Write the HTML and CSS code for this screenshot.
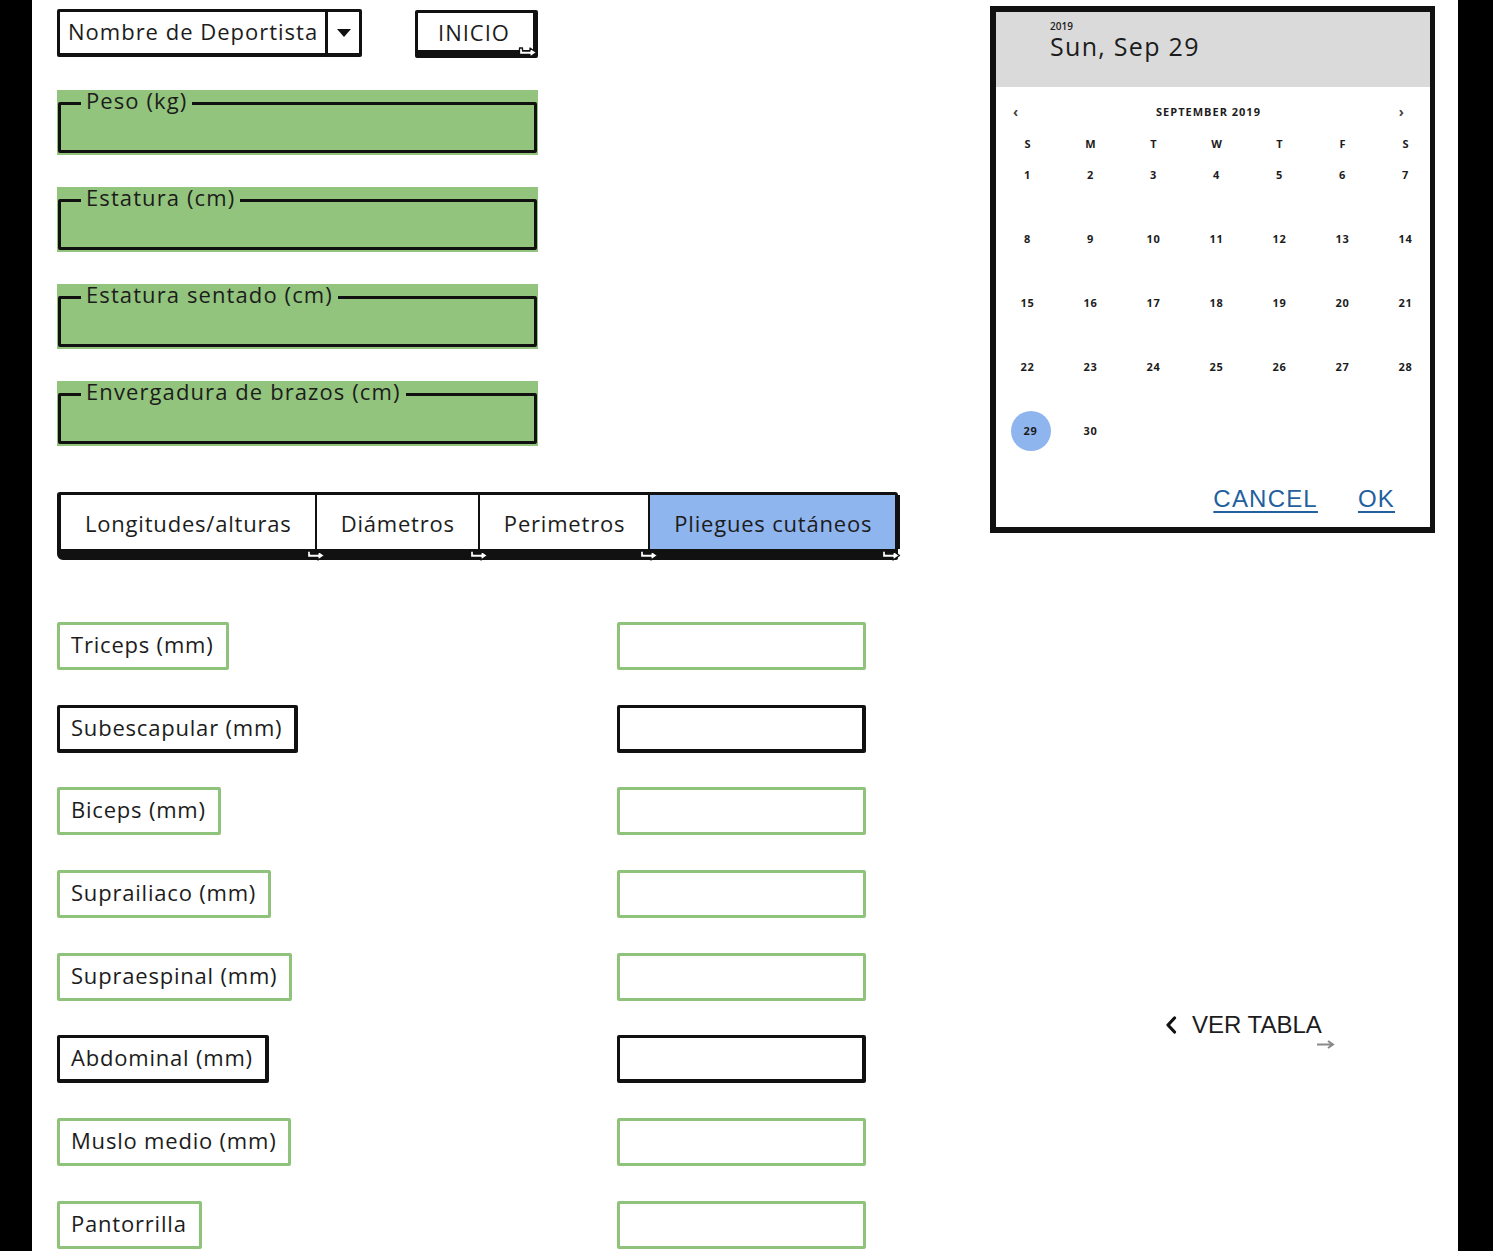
FILE: index.html
```html
<!DOCTYPE html>
<html lang="es">
<head>
<meta charset="utf-8">
<title>Pliegues cutáneos</title>
<link rel="stylesheet" href="styles.css">
</head>
<body>
<div class="screen">
  <main class="left">
    <div class="toprow">
      <div class="select">
        <span class="select-text">Nombre de Deportista</span>
        <span class="select-btn"><svg width="14" height="8" viewBox="0 0 14 8"><path d="M0 0H14L7 8Z" fill="#111"/></svg></span>
      </div>
      <button class="btn">INICIO<svg class="link" width="20" height="11" viewBox="0 0 20 11"><path d="M1.5 1V7.5H12V10L18.5 5.5L12 1V4H4.5V1Z" fill="#fff" stroke="#111" stroke-width="1.3" stroke-linejoin="round"/></svg></button>
    </div>

    <div class="field"><fieldset><legend>Peso (kg)</legend></fieldset></div>
    <div class="field"><fieldset><legend>Estatura (cm)</legend></fieldset></div>
    <div class="field"><fieldset><legend>Estatura sentado (cm)</legend></fieldset></div>
    <div class="field"><fieldset><legend>Envergadura de brazos (cm)</legend></fieldset></div>

    <nav class="tabs">
      <div class="tab">Longitudes/alturas<svg class="link tab-link" width="20" height="11" viewBox="0 0 20 11"><path d="M1.5 1V7.5H12V10L18.5 5.5L12 1V4H4.5V1Z" fill="#fff" stroke="#111" stroke-width="1.3" stroke-linejoin="round"/></svg></div>
      <div class="tab">Diámetros<svg class="link tab-link" width="20" height="11" viewBox="0 0 20 11"><path d="M1.5 1V7.5H12V10L18.5 5.5L12 1V4H4.5V1Z" fill="#fff" stroke="#111" stroke-width="1.3" stroke-linejoin="round"/></svg></div>
      <div class="tab">Perimetros<svg class="link tab-link" width="20" height="11" viewBox="0 0 20 11"><path d="M1.5 1V7.5H12V10L18.5 5.5L12 1V4H4.5V1Z" fill="#fff" stroke="#111" stroke-width="1.3" stroke-linejoin="round"/></svg></div>
      <div class="tab active">Pliegues cutáneos<svg class="link tab-link" width="20" height="11" viewBox="0 0 20 11"><path d="M1.5 1V7.5H12V10L18.5 5.5L12 1V4H4.5V1Z" fill="#fff" stroke="#111" stroke-width="1.3" stroke-linejoin="round"/></svg></div>
    </nav>

    <div class="measures">
      <div class="m-label">Triceps (mm)</div><div class="m-input"></div>
      <div class="m-label dark">Subescapular (mm)</div><div class="m-input dark"></div>
      <div class="m-label">Biceps (mm)</div><div class="m-input"></div>
      <div class="m-label">Suprailiaco (mm)</div><div class="m-input"></div>
      <div class="m-label">Supraespinal (mm)</div><div class="m-input"></div>
      <div class="m-label dark">Abdominal (mm)</div><div class="m-input dark"></div>
      <div class="m-label">Muslo medio (mm)</div><div class="m-input"></div>
      <div class="m-label">Pantorrilla</div><div class="m-input"></div>
    </div>
  </main>

  <aside class="right">
    <div class="calendar">
      <div class="cal-head">
        <div class="cal-year">2019</div>
        <div class="cal-date">Sun, Sep 29</div>
      </div>
      <div class="cal-body">
        <div class="cal-month"><span class="nav">‹</span><span class="month-title">SEPTEMBER 2019</span><span class="nav">›</span></div>
        <div class="cal-week">
          <span>S</span><span>M</span><span>T</span><span>W</span><span>T</span><span>F</span><span>S</span>
        </div>
        <div class="cal-grid">
          <span><b>1</b></span><span><b>2</b></span><span><b>3</b></span><span><b>4</b></span><span><b>5</b></span><span><b>6</b></span><span><b>7</b></span>
          <span><b>8</b></span><span><b>9</b></span><span><b>10</b></span><span><b>11</b></span><span><b>12</b></span><span><b>13</b></span><span><b>14</b></span>
          <span><b>15</b></span><span><b>16</b></span><span><b>17</b></span><span><b>18</b></span><span><b>19</b></span><span><b>20</b></span><span><b>21</b></span>
          <span><b>22</b></span><span><b>23</b></span><span><b>24</b></span><span><b>25</b></span><span><b>26</b></span><span><b>27</b></span><span><b>28</b></span>
          <span><b class="sel">29</b></span><span><b>30</b></span>
        </div>
        <div class="cal-actions">
          <span class="cal-btn">CANCEL</span>
          <span class="cal-btn">OK</span>
        </div>
      </div>
    </div>

    <div class="vertabla">
      <svg class="chev" width="12" height="18" viewBox="0 0 12 18"><path d="M9.5 2L3 9L9.5 16" fill="none" stroke="#111" stroke-width="3.2" stroke-linecap="round" stroke-linejoin="round"/></svg>
      <span class="vt-text">VER TABLA<svg class="vt-link" width="18" height="9" viewBox="0 0 18 9"><path d="M0 4.5H15M11 1L16 4.5L11 8" fill="none" stroke="#8a8a8a" stroke-width="2"/></svg></span>
    </div>
  </aside>
</div>
</body>
</html>
```

FILE: styles.css
```css
* { box-sizing: border-box; }

html, body { margin: 0; padding: 0; }

body {
  background: #000;
  width: 1493px;
  height: 1251px;
  overflow: hidden;
  font-family: "Open Sans", "Noto Sans", sans-serif;
  color: #1c1c1c;
}

.screen {
  margin-left: 32px;
  width: 1426px;
  height: 1251px;
  background: #fff;
  padding: 6px 0 0 25px;
  display: grid;
  grid-template-columns: 933px 445px;
  align-items: start;
  overflow: hidden;
}

/* ---------- left column ---------- */
.left { padding-top: 3px; }

.toprow {
  display: flex;
  gap: 53px;
  height: 48px;
}

.select {
  width: 305px;
  height: 48px;
  display: flex;
  border: 3px solid #111;
  border-bottom-width: 4px;
  border-radius: 2px;
}

.select-text {
  flex: 1;
  padding-left: 8px;
  font-size: 22px;
  letter-spacing: 1px;
  line-height: 39px;
  white-space: nowrap;
}

.select-btn {
  width: 34px;
  border-left: 3px solid #111;
  display: flex;
  align-items: center;
  justify-content: center;
}

.btn {
  position: relative;
  width: 123px;
  height: 48px;
  margin-top: 1px;
  padding: 0 3px 0 0;
  background: #fff;
  border: 3px solid #111;
  border-right-width: 5px;
  border-bottom-width: 8px;
  border-radius: 2px;
  font-family: "Open Sans", sans-serif;
  font-size: 22px;
  letter-spacing: 1px;
  color: #1c1c1c;
  line-height: 32px;
}

.link {
  position: absolute;
  right: -5px;
  bottom: -8px;
}

.field {
  width: 481px;
  height: 65px;
  background: #93c47d;
  margin-top: 32px;
  padding: 0 1px;
}
.toprow + .field { margin-top: 33px; }

fieldset {
  margin: 0;
  padding: 0;
  height: 63px;
  border: 3px solid #111;
  border-radius: 2px;
}

legend {
  margin-left: 20px;
  padding: 0 5px 6px;
  font-size: 22px;
  line-height: 20px;
  letter-spacing: 1.1px;
}

.tabs {
  margin-top: 46px;
  display: flex;
  width: 841px;
  height: 68px;
  border: 4px solid #111;
  border-top-width: 3px;
  border-bottom-width: 11px;
  border-radius: 3px 3px 2px 6px;
}

.tab {
  position: relative;
  display: flex;
  align-items: center;
  padding: 2px 23px 0 24px;
  font-size: 22px;
  letter-spacing: 0.8px;
  white-space: nowrap;
}
.tab + .tab { border-left: 2px solid #111; }
.tab-link { right: -11px; bottom: -12px; }

.tab.active {
  flex: 1;
  background: #8fb5ef;
  border-right: 5px solid #111;
  margin-right: -4px;
}
.tab.active .tab-link { right: -6px; }

.measures {
  margin-top: 62px;
  display: grid;
  grid-template-columns: 560px 249px;
  row-gap: 34.7px;
}

.m-label {
  justify-self: start;
  height: 48px;
  border: 3px solid #8fc27a;
  padding: 0 12px 0 11px;
  font-size: 22px;
  letter-spacing: 0.8px;
  line-height: 39px;
  white-space: nowrap;
  border-radius: 2px;
}

.m-input {
  height: 48px;
  border: 3px solid #8fc27a;
  border-radius: 2px;
}

.dark {
  border-color: #111;
  border-bottom-width: 4px;
  border-right-width: 4px;
}

/* ---------- right column ---------- */
.calendar {
  width: 445px;
  height: 527px;
  border: 6px solid #111;
  border-right-width: 5px;
  display: flex;
  flex-direction: column;
}

.cal-head {
  height: 75px;
  background: #dadada;
  padding: 9px 0 0 54px;
}

.cal-year {
  font-size: 10px;
  line-height: 11px;
  font-weight: 600;
}

.cal-date {
  margin-top: 1px;
  font-size: 25px;
  line-height: 26px;
  letter-spacing: 1.3px;
}

.cal-body { padding-top: 8px; }

.cal-month {
  display: flex;
  justify-content: space-between;
  align-items: center;
  height: 32px;
  padding: 0 26px 0 17px;
}

.nav {
  font-size: 14px;
  font-weight: 700;
  color: #444;
}

.month-title {
  font-size: 11px;
  font-weight: 700;
  letter-spacing: 1px;
}

.cal-week,
.cal-grid {
  display: grid;
  grid-template-columns: repeat(7, 63px);
  justify-items: center;
}

.cal-week {
  height: 32px;
  align-items: center;
  font-size: 11px;
  font-weight: 700;
}

.cal-grid { grid-auto-rows: 64px; }

.cal-grid span {
  display: flex;
  justify-content: center;
  align-items: flex-start;
}

.cal-grid b {
  width: 40px;
  height: 40px;
  margin-top: -4px;
  border-radius: 50%;
  text-align: center;
  line-height: 40px;
  font-size: 11px;
  font-weight: 700;
  letter-spacing: 0.8px;
}

.cal-grid b.sel {
  background: #8fb5ef;
  margin-left: 6px;
}

.cal-actions {
  height: 40px;
  display: flex;
  justify-content: flex-end;
  align-items: center;
  gap: 40px;
  padding-right: 35px;
}

.cal-btn {
  font-family: "Liberation Sans", Arial, sans-serif;
  font-size: 24px;
  letter-spacing: 1.2px;
  color: #245f9e;
  text-decoration: underline;
  text-decoration-thickness: 2px;
  text-underline-offset: 4px;
}

.vertabla {
  margin: 477px 0 0 175px;
  display: flex;
  align-items: center;
  gap: 15px;
  height: 30px;
}

.vt-text {
  position: relative;
  font-family: "Liberation Sans", Arial, sans-serif;
  font-size: 24px;
  line-height: 30px;
  color: #1c1c1c;
}

.vt-link {
  position: absolute;
  right: -13px;
  bottom: -9px;
}
```
